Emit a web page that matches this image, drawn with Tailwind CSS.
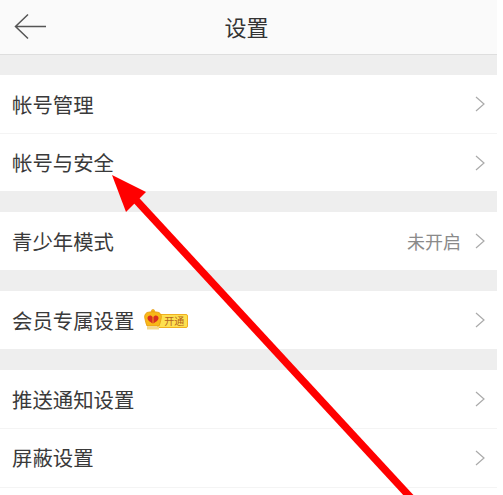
<!DOCTYPE html>
<html lang="zh">
<head>
  <meta charset="UTF-8">
  <title>设置</title>
  <script src="https://cdn.jsdelivr.net/npm/@tailwindcss/browser@4"></script>
</head>
<body class="bg-white font-['Noto_Sans_CJK_SC','Noto_Sans',sans-serif]">
  <div class="relative h-[495px] w-[503px] overflow-hidden">
    <div class="w-[497px]">
      <!-- Header -->
      <header class="relative flex h-[55px] items-center justify-center border-b border-[#dedede] bg-[#fafafa] pr-1">
        <svg class="absolute left-[14px] top-[13px]" width="33" height="27" viewBox="0 0 33 27" fill="none" stroke="#555" stroke-width="1.5">
          <path d="M32 13.5H2M14 1.5 1.5 13.5 14 25.5"/>
        </svg>
        <h1 class="pb-[2px] text-[22px] text-[#333]">设置</h1>
      </header>

      <div class="h-5 bg-[#eeeeee]"></div>

      <!-- Account -->
      <a class="flex h-[58px] items-center justify-between px-3 text-[20.4px] text-[#3a3a3a]">帐号管理
        <svg width="10" height="16" viewBox="0 0 10 16" fill="none" stroke="#aaa" stroke-width="1.2"><path d="M1 1l8 7-8 7"/></svg>
      </a>
      <div class="h-px bg-[#f4f4f4]"></div>
      <a class="flex h-[57px] items-center justify-between px-3 text-[20.4px] text-[#3a3a3a]">帐号与安全
        <svg width="10" height="16" viewBox="0 0 10 16" fill="none" stroke="#aaa" stroke-width="1.2"><path d="M1 1l8 7-8 7"/></svg>
      </a>

      <div class="h-[21px] bg-[#eeeeee]"></div>

      <!-- Teen mode -->
      <a class="flex h-[58px] items-center justify-between px-3 text-[20.4px] text-[#3a3a3a]">青少年模式
        <span class="flex items-center gap-[14px] text-[18px] text-[#8a8a8a]">未开启
          <svg width="10" height="16" viewBox="0 0 10 16" fill="none" stroke="#aaa" stroke-width="1.2"><path d="M1 1l8 7-8 7"/></svg>
        </span>
      </a>

      <div class="h-[21px] bg-[#eeeeee]"></div>

      <!-- VIP -->
      <a class="flex h-[58px] items-center justify-between px-3 text-[20.4px] text-[#3a3a3a]">
        <span class="flex items-center gap-[10px]">会员专属设置
          <span class="relative flex h-[22px] w-[44px] items-center">
            <span class="absolute bottom-[3px] left-[13px] flex h-[14px] w-[31px] items-center justify-end rounded-[2px] border border-[#f0b020] bg-[#fde050] pr-[3px] text-[10px] leading-none text-[#b5651d]">开通</span>
            <svg class="absolute left-0 top-0" width="18" height="22" viewBox="0 0 18 22">
              <circle cx="9" cy="2" r="1.6" fill="#f8b818" stroke="#e59a10" stroke-width=".6"/>
              <path d="M3 3.5C6 2.5 12 2.5 15 3.5 17.5 5 17.8 8 17 10 16.5 12.5 16 15 15 17H3C2 15 1.5 12.5 1 10 .2 8 .5 5 3 3.5Z" fill="#f8b818" stroke="#e59a10" stroke-width=".8"/>
              <path d="M8.6 8C7.5 5.5 3.5 6 3.5 9 3.5 11.500 6.5 13 8.600 14.500Z" fill="#d92f20"/>
              <path d="M9.4 8C10.500 5.500 14.500 6 14.500 9 14.500 11.500 11.500 13 9.400 14.500Z" fill="#d92f20"/>
              <path d="M3 17.500H15V20.500H3Z" fill="#f3d98a"/>
            </svg>
          </span>
        </span>
        <svg width="10" height="16" viewBox="0 0 10 16" fill="none" stroke="#aaa" stroke-width="1.2"><path d="M1 1l8 7-8 7"/></svg>
      </a>

      <div class="h-[21px] bg-[#eeeeee]"></div>

      <!-- Notifications -->
      <a class="flex h-[58px] items-center justify-between px-3 text-[20.4px] text-[#3a3a3a]">推送通知设置
        <svg width="10" height="16" viewBox="0 0 10 16" fill="none" stroke="#aaa" stroke-width="1.2"><path d="M1 1l8 7-8 7"/></svg>
      </a>
      <div class="h-px bg-[#f4f4f4]"></div>
      <a class="flex h-[58px] items-center justify-between px-3 pb-px text-[20.4px] text-[#3a3a3a]">屏蔽设置
        <svg width="10" height="16" viewBox="0 0 10 16" fill="none" stroke="#aaa" stroke-width="1.2"><path d="M1 1l8 7-8 7"/></svg>
      </a>
      <div class="h-px bg-[#f4f4f4]"></div>
    </div>

    <!-- Red annotation arrow -->
    <svg class="absolute left-0 top-0" width="503" height="495" viewBox="0 0 503 495">
      <path d="M136 200 412 499" stroke="#ff0000" stroke-width="7.5" fill="none"/>
      <path d="M112 175 146 192 126 212Z" fill="#ff0000"/>
    </svg>
  </div>
</body>
</html>
